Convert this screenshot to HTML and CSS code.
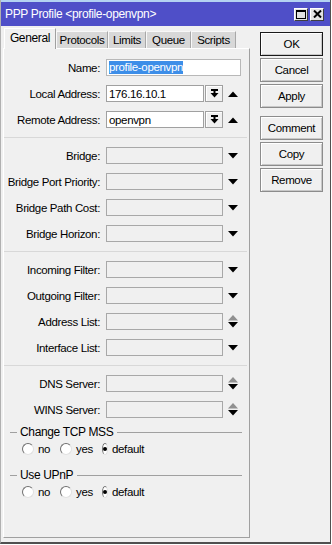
FILE: index.html
```html
<!DOCTYPE html>
<html lang="en">

<head>
    <meta charset="UTF-8">
    <meta name="viewport" content="width=device-width, initial-scale=1.0">
    <title>PPP Profile</title>
    <link rel="stylesheet" href="styles.css">
</head>

<body>

    <div class="window">
        <div class="titlebar">
            <span class="title">PPP Profile &lt;profile-openvpn&gt;</span>
            <span class="title-buttons">
                <span class="tbtn">
                    <svg width="10" height="9" viewBox="0 0 10 9"><rect x="0.5" y="0.5" width="9" height="8" fill="none" stroke="#000"/><rect x="0" y="0" width="10" height="2" fill="#000"/></svg>
                </span>
                <span class="tbtn">
                    <svg width="9" height="8" viewBox="0 0 9 8"><path d="M1 0.5 L8 7.5 M8 0.5 L1 7.5" stroke="#000" stroke-width="2"/></svg>
                </span>
            </span>
        </div>

        <div class="content">
            <div class="main">
                <div class="tabs">
                    <div class="tab active">General</div>
                    <div class="tab w-protocols">Protocols</div>
                    <div class="tab w-limits">Limits</div>
                    <div class="tab w-queue">Queue</div>
                    <div class="tab w-scripts">Scripts</div>
                </div>

                <div class="panel">
                    <div class="section">
                        <div class="row">
                            <span class="label">Name:</span>
                            <span class="field white name"><span class="selected">profile-openvpn</span></span>
                        </div>
                        <div class="row">
                            <span class="label">Local Address:</span>
                            <span class="field white short">176.16.10.1</span>
                            <span class="drop-btn">
                                <svg width="9" height="9" viewBox="0 0 9 9"><rect x="1" y="0" width="7" height="2" fill="#000"/><rect x="3.5" y="2" width="2" height="2" fill="#000"/><path d="M0.5 4 H8.5 L4.5 8.5 Z" fill="#000"/></svg>
                            </span>
                            <span class="arrow"><svg width="10" height="6" viewBox="0 0 10 6"><path d="M0 6 L5 0.5 L10 6 Z" fill="#000"/></svg></span>
                        </div>
                        <div class="row">
                            <span class="label">Remote Address:</span>
                            <span class="field white short">openvpn</span>
                            <span class="drop-btn">
                                <svg width="9" height="9" viewBox="0 0 9 9"><rect x="1" y="0" width="7" height="2" fill="#000"/><rect x="3.5" y="2" width="2" height="2" fill="#000"/><path d="M0.5 4 H8.5 L4.5 8.5 Z" fill="#000"/></svg>
                            </span>
                            <span class="arrow"><svg width="10" height="6" viewBox="0 0 10 6"><path d="M0 6 L5 0.5 L10 6 Z" fill="#000"/></svg></span>
                        </div>
                    </div>

                    <div class="sep"></div>

                    <div class="section">
                        <div class="row">
                            <span class="label">Bridge:</span>
                            <span class="field combo"></span>
                            <span class="arrow"><svg width="10" height="6" viewBox="0 0 10 6"><path d="M0 0 L10 0 L5 5.5 Z" fill="#000"/></svg></span>
                        </div>
                        <div class="row">
                            <span class="label">Bridge Port Priority:</span>
                            <span class="field combo"></span>
                            <span class="arrow"><svg width="10" height="6" viewBox="0 0 10 6"><path d="M0 0 L10 0 L5 5.5 Z" fill="#000"/></svg></span>
                        </div>
                        <div class="row">
                            <span class="label">Bridge Path Cost:</span>
                            <span class="field combo"></span>
                            <span class="arrow"><svg width="10" height="6" viewBox="0 0 10 6"><path d="M0 0 L10 0 L5 5.5 Z" fill="#000"/></svg></span>
                        </div>
                        <div class="row">
                            <span class="label">Bridge Horizon:</span>
                            <span class="field combo"></span>
                            <span class="arrow"><svg width="10" height="6" viewBox="0 0 10 6"><path d="M0 0 L10 0 L5 5.5 Z" fill="#000"/></svg></span>
                        </div>
                    </div>

                    <div class="sep"></div>

                    <div class="section">
                        <div class="row">
                            <span class="label">Incoming Filter:</span>
                            <span class="field combo"></span>
                            <span class="arrow"><svg width="10" height="6" viewBox="0 0 10 6"><path d="M0 0 L10 0 L5 5.5 Z" fill="#000"/></svg></span>
                        </div>
                        <div class="row">
                            <span class="label">Outgoing Filter:</span>
                            <span class="field combo"></span>
                            <span class="arrow"><svg width="10" height="6" viewBox="0 0 10 6"><path d="M0 0 L10 0 L5 5.5 Z" fill="#000"/></svg></span>
                        </div>
                        <div class="row">
                            <span class="label">Address List:</span>
                            <span class="field combo"></span>
                            <span class="arrow"><svg width="10" height="13" viewBox="0 0 10 13"><path d="M0 5.5 L5 0 L10 5.5 Z" fill="#909090"/><path d="M0 7 L10 7 L5 12.5 Z" fill="#000"/></svg></span>
                        </div>
                        <div class="row">
                            <span class="label">Interface List:</span>
                            <span class="field combo"></span>
                            <span class="arrow"><svg width="10" height="6" viewBox="0 0 10 6"><path d="M0 0 L10 0 L5 5.5 Z" fill="#000"/></svg></span>
                        </div>
                    </div>

                    <div class="sep"></div>

                    <div class="section">
                        <div class="row">
                            <span class="label">DNS Server:</span>
                            <span class="field combo"></span>
                            <span class="arrow"><svg width="10" height="13" viewBox="0 0 10 13"><path d="M0 5.5 L5 0 L10 5.5 Z" fill="#909090"/><path d="M0 7 L10 7 L5 12.5 Z" fill="#000"/></svg></span>
                        </div>
                        <div class="row">
                            <span class="label">WINS Server:</span>
                            <span class="field combo"></span>
                            <span class="arrow"><svg width="10" height="13" viewBox="0 0 10 13"><path d="M0 5.5 L5 0 L10 5.5 Z" fill="#909090"/><path d="M0 7 L10 7 L5 12.5 Z" fill="#000"/></svg></span>
                        </div>
                    </div>

                    <div class="group first">
                        <span class="gline lead"></span>
                        <span class="gtitle">Change TCP MSS</span>
                        <span class="gline"></span>
                    </div>
                    <div class="radios">
                        <span class="radio-item"><span class="radio"></span>no</span>
                        <span class="radio-item w-yes"><span class="radio"></span>yes</span>
                        <span class="radio-item"><span class="radio checked"></span>default</span>
                    </div>

                    <div class="group">
                        <span class="gline lead"></span>
                        <span class="gtitle">Use UPnP</span>
                        <span class="gline"></span>
                    </div>
                    <div class="radios">
                        <span class="radio-item"><span class="radio"></span>no</span>
                        <span class="radio-item w-yes"><span class="radio"></span>yes</span>
                        <span class="radio-item"><span class="radio checked"></span>default</span>
                    </div>
                </div>
            </div>

            <div class="side">
                <div class="btn default">OK</div>
                <div class="btn">Cancel</div>
                <div class="btn">Apply</div>
                <div class="btn spaced">Comment</div>
                <div class="btn">Copy</div>
                <div class="btn">Remove</div>
            </div>
        </div>
    </div>

</body>

</html>
```

FILE: styles.css
```css
body {
    margin: 0;
    background-color: #ffffff;
    font-family: "Liberation Sans", Arial, sans-serif;
    font-size: 11.5px;
    letter-spacing: -0.35px;
    color: #000;
}

.window {
    width: 331px;
    height: 544px;
    box-sizing: border-box;
    background-color: #f0f0f0;
    border-left: 1px solid #b0b0b0;
    border-right: 1px solid #505050;
    border-bottom: 2px solid #505050;
}

.titlebar {
    height: 24px;
    border-top: 2px solid #b4d2f2;
    background-color: #4f4fc8;
    color: #fff;
    display: flex;
    align-items: center;
    justify-content: space-between;
    padding: 0 6px 0 4px;
}

.title {
    font-size: 12px;
}

.title-buttons {
    display: flex;
    gap: 2px;
}

.tbtn {
    width: 14px;
    height: 13px;
    box-sizing: border-box;
    background-color: #e2e2e2;
    border: 1px solid;
    border-color: #fff #404040 #404040 #fff;
    display: flex;
    align-items: center;
    justify-content: center;
}

.content {
    display: flex;
}

.main {
    padding-left: 2px;
    width: 247px;
}

.tabs {
    display: flex;
    align-items: flex-end;
    height: 20px;
    margin-top: 2px;
    padding-left: 1px;
}

.tab {
    height: 17px;
    box-sizing: border-box;
    background-color: #d8d8d8;
    border-left: 1px solid #f8f8f8;
    border-top: 1px solid #f8f8f8;
    border-right: 1px solid #a8a8a8;
    display: flex;
    align-items: center;
    justify-content: center;
}

.tab.active {
    width: 52px;
    height: 21px;
    margin-bottom: -1px;
    background-color: #f0f0f0;
    border-color: #fff;
    border-right-color: #a0a0a0;
    position: relative;
    z-index: 1;
    font-size: 12px;
    padding-bottom: 2px;
}

.w-protocols {
    width: 52px;
}

.w-limits {
    width: 38px;
}

.w-queue {
    width: 45px;
}

.w-scripts {
    width: 45px;
}

.panel {
    height: 490px;
    box-sizing: border-box;
    border: 1px solid #a0a0a0;
    border-top-color: #fff;
    border-left-color: #fff;
    padding-top: 10px;
}

.section {
    display: flex;
    flex-direction: column;
    gap: 9px;
}

.row {
    display: flex;
    align-items: center;
    height: 17px;
}

.label {
    width: 96px;
    text-align: right;
    white-space: nowrap;
    margin-right: 6px;
}

.field {
    height: 17px;
    box-sizing: border-box;
    border: 1px solid #a8a8a8;
    padding-left: 2px;
    display: flex;
    align-items: center;
    white-space: nowrap;
}

.field.white {
    background-color: #fff;
    border-color: #a0a0a0;
}

.field.name {
    width: 135px;
    border-color: #b8b8b8;
}

.field.short {
    width: 98px;
}

.field.combo {
    width: 117px;
}

.selected {
    background-color: #3d8ee8;
    color: #fff;
    line-height: 13px;
}

.drop-btn {
    width: 18px;
    height: 17px;
    box-sizing: border-box;
    margin-left: 1px;
    border: 1px solid #a0a0a0;
    box-shadow: inset 1px 1px 0 #fff;
    display: flex;
    align-items: center;
    justify-content: center;
}

.arrow {
    width: 10px;
    margin-left: 5px;
    display: flex;
    align-items: center;
}

.sep {
    height: 1px;
    background-color: #d8d8d8;
    margin: 9px 2px 9px 0;
}

.group {
    display: flex;
    align-items: center;
    height: 14px;
    margin-top: 12px;
}

.group.first {
    margin-top: 7px;
}

.gline {
    flex: 1;
    height: 1px;
    background-color: #a0a0a0;
    margin-right: 7px;
}

.gline.lead {
    flex: none;
    width: 7px;
    margin-left: 6px;
    margin-right: 3px;
}

.gtitle {
    margin-right: 4px;
    font-size: 12px;
}

.radios {
    display: flex;
    align-items: center;
    height: 14px;
    margin-top: 3px;
    padding-left: 18px;
}

.radio-item {
    display: flex;
    align-items: center;
    width: 38px;
}

.radio-item.w-yes {
    width: 42px;
}

.radio {
    width: 12px;
    height: 12px;
    box-sizing: border-box;
    border-radius: 50%;
    background-color: #fff;
    border: 1px solid;
    border-color: #707070 #e0e0e0 #e0e0e0 #707070;
    margin-right: 4px;
    display: flex;
    align-items: center;
    justify-content: center;
}

.radio.checked::after {
    content: "";
    width: 4px;
    height: 4px;
    border-radius: 50%;
    background-color: #000;
}

.side {
    margin-left: 10px;
    padding-top: 6px;
    display: flex;
    flex-direction: column;
    gap: 2px;
}

.btn {
    width: 63px;
    height: 24px;
    box-sizing: border-box;
    border: 1px solid #8c8c8c;
    box-shadow: inset 1px 1px 0 #fff, inset -1px -1px 0 #c8c8c8;
    display: flex;
    align-items: center;
    justify-content: center;
}

.btn.default {
    border-color: #1a1a1a;
}

.btn.spaced {
    margin-top: 6px;
}
```
